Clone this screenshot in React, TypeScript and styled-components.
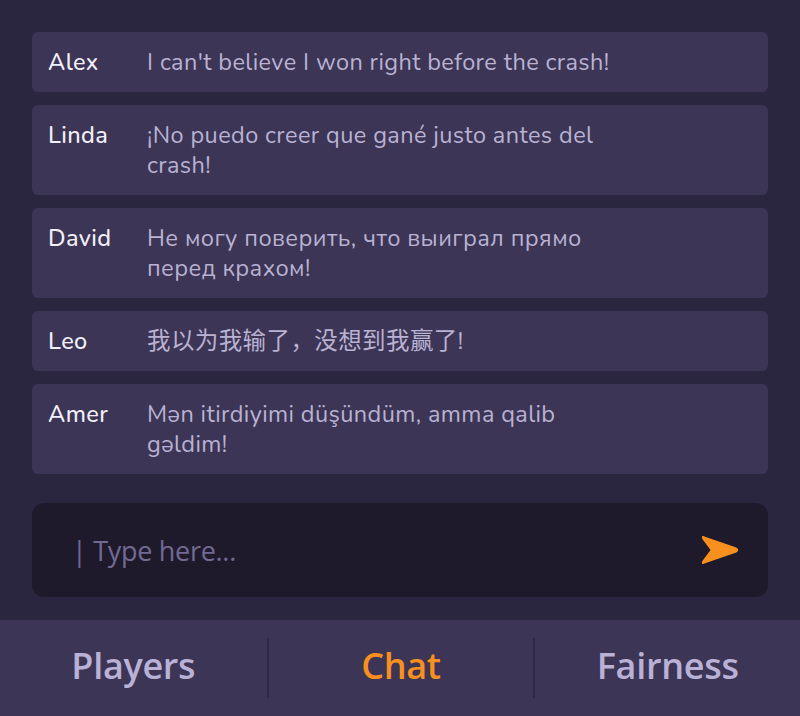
import styled, { createGlobalStyle } from "styled-components";

type Message = {
  name: string;
  text: string;
};

const messages: Message[] = [
  { name: "Alex", text: "I can't believe I won right before the crash!" },
  { name: "Linda", text: "¡No puedo creer que gané justo antes del crash!" },
  { name: "David", text: "Не могу поверить, что выиграл прямо перед крахом!" },
  { name: "Leo", text: "我以为我输了，没想到我赢了!" },
  { name: "Amer", text: "Mən itirdiyimi düşündüm, amma qalib gəldim!" },
];

const tabs = ["Players", "Chat", "Fairness"];

const GlobalStyle = createGlobalStyle`
  html, body {
    margin: 0;
    padding: 0;
    background: #2b2640;
  }
  body {
    font-family: "Nunito", "Open Sans", "Noto Sans CJK SC", sans-serif;
  }
`;

const Screen = styled.div`
  width: 800px;
  height: 716px;
  display: flex;
  flex-direction: column;
  background: #2b2640;
`;

const ChatArea = styled.div`
  flex: 1;
  display: flex;
  flex-direction: column;
  padding: 32px 32px 23px;
  gap: 13px;
`;

const MessageCard = styled.div`
  display: flex;
  background: #3c3555;
  border-radius: 6px;
  padding: 15px 16px;
  font-size: 23.5px;
  line-height: 30px;
  letter-spacing: 0.4px;
`;

const Name = styled.span`
  width: 99px;
  flex-shrink: 0;
  color: #f1eff8;
  font-weight: 500;
`;

const Text = styled.span`
  max-width: 480px;
  color: #b9b2d3;
`;

const InputBox = styled.div`
  margin-top: 16px;
  height: 94px;
  display: flex;
  align-items: center;
  justify-content: space-between;
  background: #1f1a2b;
  border-radius: 12px;
  padding: 0 28px 0 40px;
`;

const Placeholder = styled.span`
  font-family: "Open Sans", sans-serif;
  font-size: 27px;
  letter-spacing: -0.3px;
  color: #716a92;
`;

const TabBar = styled.div`
  height: 96px;
  display: grid;
  grid-template-columns: 1fr 1fr 1fr;
  align-items: center;
  background: #3c3555;
`;

const Tab = styled.div<{ $active?: boolean; $divider?: boolean }>`
  height: 60px;
  padding-bottom: 6px;
  box-sizing: border-box;
  display: flex;
  align-items: center;
  justify-content: center;
  font-family: "Open Sans", sans-serif;
  font-size: 36px;
  font-weight: 600;
  letter-spacing: -0.3px;
  color: ${(p) => (p.$active ? "#f7901e" : "#b9b1d6")};
  border-left: ${(p) => (p.$divider ? "2px solid #2f2945" : "none")};
`;

function SendIcon() {
  return (
    <svg width="40" height="32" viewBox="0 0 40 32">
      <path
        d="M4 3.5 Q2 2 3.5 5 L11 15 Q12 16 11 17 L3.5 27 Q2 30 4 28.5 L36 17.5 Q38.5 16 36 14.5 Z"
        fill="#f7901e"
        stroke="#f7901e"
        strokeWidth="2"
        strokeLinejoin="round"
      />
    </svg>
  );
}

export default function App() {
  return (
    <>
      <GlobalStyle />
      <Screen>
        <ChatArea>
          {messages.map((m) => (
            <MessageCard key={m.name}>
              <Name>{m.name}</Name>
              <Text>{m.text}</Text>
            </MessageCard>
          ))}
          <InputBox>
            <Placeholder>| Type here...</Placeholder>
            <SendIcon />
          </InputBox>
        </ChatArea>
        <TabBar>
          {tabs.map((t, i) => (
            <Tab key={t} $active={t === "Chat"} $divider={i > 0}>
              {t}
            </Tab>
          ))}
        </TabBar>
      </Screen>
    </>
  );
}
